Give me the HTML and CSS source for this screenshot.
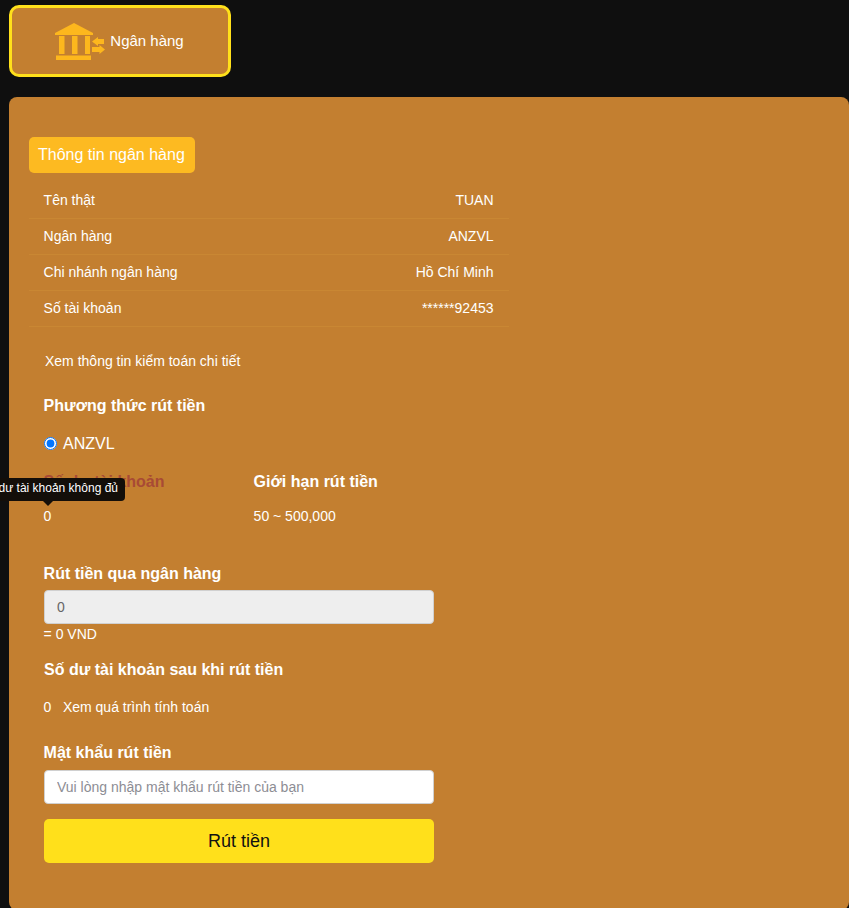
FILE: index.html
```html
<!DOCTYPE html>
<html lang="vi">
<head>
<meta charset="utf-8">
<title>Rút tiền</title>
<link rel="stylesheet" href="styles.css">
</head>
<body>
<div class="tabs">
  <button class="tab">
    <svg class="tab-icon" width="50" height="37" viewBox="0 0 50 37">
      <path d="M19 0 L38 10 V12 H0 V10 Z" fill="#fdb71d"/>
      <rect x="4" y="13" width="5.500" height="18" fill="#fdb71d"/>
      <rect x="17" y="13" width="5.500" height="18" fill="#fdb71d"/>
      <rect x="30" y="13" width="5" height="18" fill="#fdb71d"/>
      <rect x="1" y="32.500" width="35" height="4.500" fill="#fdb71d"/>
      <path d="M37 18.500 L43 14 V16 H49 V21 H43 V23 Z" fill="#fdb71d"/>
      <path d="M50 26.500 L44.500 22 V24 H37 V29 H44.500 V31 Z" fill="#fdb71d"/>
    </svg>
    <span>Ngân hàng</span>
  </button>
</div>
<main class="card">
  <h2 class="badge">Thông tin ngân hàng</h2>
  <div class="info">
    <div class="info-row"><span>Tên thật</span><span>TUAN</span></div>
    <div class="info-row"><span>Ngân hàng</span><span>ANZVL</span></div>
    <div class="info-row"><span>Chi nhánh ngân hàng</span><span>Hồ Chí Minh</span></div>
    <div class="info-row"><span>Số tài khoản</span><span>******92453</span></div>
  </div>
  <a class="audit">Xem thông tin kiểm toán chi tiết</a>
  <h3 class="method-title">Phương thức rút tiền</h3>
  <label class="radio"><input type="radio" name="m" checked><span>ANZVL</span></label>
  <div class="limits">
    <div class="limit-col balance">
      <div class="col-title danger">Số dư tài khoản</div>
      <div class="col-value">0</div>
      <div class="tooltip">Số dư tài khoản không đủ</div>
    </div>
    <div class="limit-col">
      <div class="col-title">Giới hạn rút tiền</div>
      <div class="col-value">50 ~ 500,000</div>
    </div>
  </div>
  <h3 class="field-title bank">Rút tiền qua ngân hàng</h3>
  <input class="input bank-input" type="text" value="0" disabled>
  <div class="rate">= 0 VND</div>
  <h3 class="after-title">Số dư tài khoản sau khi rút tiền</h3>
  <div class="after"><span>0</span><a>Xem quá trình tính toán</a></div>
  <h3 class="field-title pass">Mật khẩu rút tiền</h3>
  <input class="input" type="password" placeholder="Vui lòng nhập mật khẩu rút tiền của bạn">
  <button class="submit">Rút tiền</button>
</main>
</body>
</html>
```
FILE: styles.css
```css
* { box-sizing: border-box; }
html, body { margin: 0; height: 908px; overflow: hidden; }
body {
  background: #0f0f0f;
  color: #fff;
  font-family: "Liberation Sans", Arial, sans-serif;
  font-size: 14px;
  padding: 5px 0 0 9px;
}
.tabs { display: flex; height: 92px; }
.tab {
  width: 222px;
  height: 72px;
  background: #c37f30;
  border: 3px solid #ffe01b;
  border-radius: 10px;
  color: #fff;
  font: 15px "Liberation Sans", Arial, sans-serif;
  display: flex;
  align-items: center;
  justify-content: center;
  gap: 5px;
  padding: 0 1px 1px 0;
}
.tab-icon { margin-top: 1px; }
.card {
  background: #c37f30;
  border-radius: 8px;
  padding: 40px 20px 0;
  height: 813px;
  position: relative;
}
.badge {
  display: inline-block;
  margin: 0;
  height: 36px;
  line-height: 35px;
  padding: 0 10px 0 9px;
  font-size: 16px;
  font-weight: 400;
  background: #fdba21;
  border-radius: 5px;
}
.info { width: 480px; margin-top: 10px; }
.info-row {
  height: 36px;
  display: flex;
  justify-content: space-between;
  align-items: center;
  padding: 0 15.500px 2px 14.600px;
  border-bottom: 1px solid #c98733;
}
.audit { display: block; margin: 25px 0 0 16px; line-height: 18px; }
.method-title { margin: 26px 0 0 14.600px; font-size: 16px; line-height: 20px; }
.radio { display: flex; align-items: center; margin: 18px 0 0 15px; font-size: 16px; line-height: 20px; gap: 6px; }
.radio input { margin: -2px 0 0; width: 13px; height: 13px; accent-color: #0075ff; }
.limits { display: flex; margin: 18px 0 0 14.600px; }
.limit-col { width: 210px; position: relative; }
.col-title { font-size: 16px; font-weight: 700; line-height: 20px; }
.danger { color: #a84a35; }
.col-value { margin-top: 14px; line-height: 20px; }
.tooltip {
  position: absolute;
  top: 5.500px;
  right: 128.600px;
  white-space: nowrap;
  background: #130e09;
  color: #fff;
  font-size: 12px;
  line-height: 20px;
  height: 23px;
  padding: 0 7px;
  border-radius: 4px;
}
.tooltip::after {
  content: "";
  position: absolute;
  right: 72px;
  bottom: -5px;
  border: 5px solid transparent;
  border-bottom: 0;
  border-top-color: #130e09;
}
.field-title { margin: 0 0 0 14.600px; font-size: 16px; line-height: 20px; }
.bank { margin-top: 38px; }
.input {
  display: block;
  width: 390px;
  height: 34px;
  margin: 7px 0 0 15px;
  border: 1px solid #d0d0d0;
  border-radius: 4px;
  padding: 0 12px;
  background: #fff;
  font: 14px "Liberation Sans", Arial, sans-serif;
  color: #666;
}
.bank-input { margin-top: 6px; }
.input:disabled { background: #eee; }
.input::placeholder { color: #8d8d94; }
.rate { margin: 2px 0 0 14.600px; line-height: 16px; }
.after-title { margin: 18px 0 0 15px; font-size: 16px; line-height: 20px; }
.after { display: flex; gap: 11.500px; margin: 17px 0 0 14.600px; line-height: 20px; }
.pass { margin-top: 26px; }
.submit {
  display: block;
  width: 390px;
  height: 44px;
  margin: 15px 0 0 15px;
  background: #ffe01b;
  border: 0;
  border-radius: 5px;
  color: #111;
  font: 18px "Liberation Sans", Arial, sans-serif;
}
```
